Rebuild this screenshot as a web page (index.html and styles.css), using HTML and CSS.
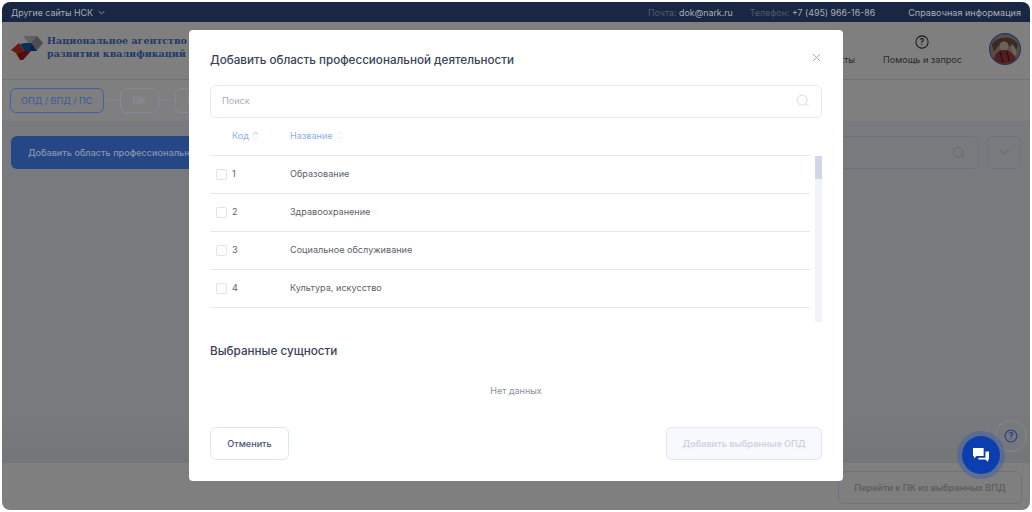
FILE: index.html
```
<!DOCTYPE html>
<html lang="ru">
<head>
<meta charset="utf-8">
<title>НСК</title>
<link rel="stylesheet" href="styles.css">
</head>
<body>
<div class="frame">
  <div class="topbar">
    <div class="sites">Другие сайты НСК <svg class="chev" viewBox="0 0 10 6" width="7" height="5"><path d="M1 1l4 4 4-4" fill="none" stroke="currentColor" stroke-width="1.2"/></svg></div>
    <div class="contacts">
      <span><i>Почта:</i> dok@nark.ru</span>
      <span><i>Телефон:</i> +7 (495) 966-16-86</span>
      <span class="ref">Справочная информация</span>
    </div>
  </div>
  <div class="page">
    <header class="head">
      <svg class="logo" viewBox="0 0 32 25" width="32" height="25">
        <path d="M12 1h14l6 7-6 7-6-7h-3z" fill="#c4c4c4"/><path d="M26 1l6 7-6 7-6-7z" fill="#9a9a9a"/>
        <path d="M9 9l5-1h6l6 8H13z" fill="#0f62b5"/><path d="M20 8l6 8h-7z" fill="#0b4a90"/>
        <path d="M0 15l8-7 5 8-8 2z" fill="#e32a22"/><path d="M5 18l8-2h7l-8 9H9z" fill="#a81818"/>
      </svg>
      <div class="brand">Национальное агентство<br>развития квалификаций</div>
      <div class="spacer"></div>
      <div class="navitem behind"><span>Контакты</span></div>
      <div class="help">
        <svg viewBox="0 0 16 16" width="14" height="14"><circle cx="8" cy="8" r="7" fill="none" stroke="#333" stroke-width="1.2"/><text x="8" y="11.3" class="qmark">?</text></svg>
        <span>Помощь и запрос</span>
      </div>
      <svg class="avatar" viewBox="0 0 32 32" width="32" height="32">
        <circle cx="16" cy="16" r="15.4" fill="#b79a8a" stroke="#3d6bd0" stroke-width="1.2"/>
        <path d="M3 12c3-9 22-11 26 0l-2 6-4-5H9l-4 6z" fill="#6f5648"/>
        <path d="M22 11c4 2 6 6 5 11l-4 1z" fill="#d8c4ad"/>
        <circle cx="15" cy="13" r="4.6" fill="#e0c0ae"/>
        <path d="M5 27c1-8 6-10 10-10s9 2 12 9c-6 6-16 6-22 1z" fill="#a83a44"/>
        <path d="M11 19l3 10M18 18l2 10" stroke="#4b2528" stroke-width="1.4"/>
      </svg>
    </header>
    <nav class="steps">
      <span class="step active">ОПД / ВПД / ПС</span><span class="dots"></span>
      <span class="step">ПК</span><span class="dots"></span>
      <span class="step">С</span>
    </nav>
    <main class="content">
      <div class="addbtn">Добавить область профессиональной деятельности</div>
      <div class="spacer"></div>
      <div class="bgsearch">
        <svg viewBox="0 0 16 16" width="14" height="14"><circle cx="7" cy="7" r="5.5" fill="none" stroke="#c8ccd6" stroke-width="1.1"/><path d="M11 11l3.5 3.5" stroke="#c8ccd6" stroke-width="1.1"/></svg>
      </div>
      <div class="bgchev"><svg viewBox="0 0 12 8" width="11" height="7"><path d="M1 1l5 5 5-5" fill="none" stroke="#c8ccd6" stroke-width="1.1"/></svg></div>
    </main>
    <footer class="foot"><span class="nextbtn">Перейти к ПК из выбранных ВПД</span></footer>
    <div class="overlay"></div>
  </div>

  <section class="modal">
    <div class="m-head">
      <h2>Добавить область профессиональной деятельности</h2>
      <svg class="close" viewBox="0 0 10 10" width="9" height="9"><path d="M1 1l8 8M9 1l-8 8" stroke="#9b9fa8" stroke-width="1"/></svg>
    </div>
    <div class="m-search">
      <span>Поиск</span>
      <svg viewBox="0 0 16 16" width="14" height="14"><circle cx="7" cy="7" r="5.7" fill="none" stroke="#d5d8df" stroke-width="1.1"/><path d="M11 11l3.5 3.5" stroke="#d5d8df" stroke-width="1.1"/></svg>
    </div>
    <div class="tablewrap">
      <div class="table">
        <div class="row th">
          <span class="c-code">Код <svg class="sort" viewBox="0 0 8 10" width="7" height="9"><path d="M1 4l3-3 3 3" fill="none" stroke="#9db8ef" stroke-width="1"/><path d="M1 6.5l3 3 3-3" fill="none" stroke="#e3e7f0" stroke-width="1"/></svg></span>
          <span class="c-name">Название <svg class="sort" viewBox="0 0 8 10" width="7" height="9"><path d="M1 4l3-3 3 3M1 6.5l3 3 3-3" fill="none" stroke="#e3e7f0" stroke-width="1"/></svg></span>
        </div>
        <div class="row"><span class="check"></span><span class="c-num">1</span><span class="c-name">Образование</span></div>
        <div class="row"><span class="check"></span><span class="c-num">2</span><span class="c-name">Здравоохранение</span></div>
        <div class="row"><span class="check"></span><span class="c-num">3</span><span class="c-name">Социальное обслуживание</span></div>
        <div class="row"><span class="check"></span><span class="c-num">4</span><span class="c-name">Культура, искусство</span></div>
      </div>
      <div class="track"><div class="thumb"></div></div>
    </div>
    <h3>Выбранные сущности</h3>
    <div class="empty">Нет данных</div>
    <div class="m-foot">
      <span class="btn">Отменить</span>
      <span class="btn disabled">Добавить выбранные ОПД</span>
    </div>
  </section>

  <div class="fabhelp"><svg viewBox="0 0 16 16" width="14" height="14"><circle cx="8" cy="8" r="6.8" fill="none" stroke="#1f3f8f" stroke-width="1.2"/><text x="8" y="11.2" class="qmark blue">?</text></svg></div>
  <div class="fab"><svg viewBox="0 0 20 18" width="18" height="16"><path d="M1 1h12v9H5l-3 3v-3H1z" fill="#fff"/><path d="M15 5h4v9h-1v3l-3-3H7v-2h8z" fill="#fff"/></svg></div>
</div>
</body>
</html>
```
FILE: styles.css
```
* { box-sizing: border-box; }
html, body { margin: 0; height: 100%; background: #fff; }
body { padding: 2px; font-family: Inter, "Liberation Sans", sans-serif; overflow: hidden; }
.frame { position: relative; width: 1028px; height: 508px; border-radius: 8px; overflow: hidden; display: flex; flex-direction: column; background: #fff; }
.topbar { height: 20px; flex: none; background: #1a2744; color: #a9adb6; font-size: 8.85px; display: flex; align-items: center; justify-content: space-between; padding: 0 9px; }
.sites { display: flex; align-items: center; gap: 4px; }
.chev { margin-left: 1px; }
.contacts { display: flex; gap: 17px; }
.contacts i { font-style: normal; color: #4f5a72; }
.ref { margin-left: 16px; font-size: 9.1px; }
.page { position: relative; flex: 1; display: flex; flex-direction: column; background: #f0f3fa; }
.head { height: 58px; flex: none; background: #fff; display: flex; align-items: center; padding: 0 9px; border-bottom: 1px solid #dde5f7; }
.logo { margin-right: 4px; margin-top: -6px; }
.brand { font-family: "DejaVu Serif", "Liberation Serif", serif; font-weight: 700; font-size: 9.5px; line-height: 12.5px; color: #3f74cc; position: relative; top: -3px; white-space: nowrap; }
.spacer { flex: 1; }
.navitem { font-size: 9.1px; color: #555; margin-right: 28px; margin-top: 17px; }
.help { display: flex; flex-direction: column; align-items: center; gap: 5px; font-size: 9.1px; color: #555; margin-right: 27px; margin-top: -2px; }
.avatar { margin-top: -4px; }
.qmark { font-family: Inter, sans-serif; font-size: 10px; font-weight: 600; text-anchor: middle; fill: #333; }
.qmark.blue { fill: #1f3f8f; }
.steps { height: 41px; flex: none; background: #fff; display: flex; align-items: center; padding: 0 8px; }
.step { position: relative; z-index: 1; height: 25px; border: 1px solid #84889a; border-radius: 6px; display: flex; align-items: center; padding: 0 12px; font-size: 9.1px; font-weight: 500; color: #8a8fa0; }
.step.active { border-color: #3f62a8; color: #3f5f9f; padding: 0 10px; }
.dots { position: relative; z-index: 1; width: 16px; border-top: 1px dotted #84889a; }
.content { flex: 1; display: flex; align-items: flex-start; padding: 15px 9px; gap: 8px; background: linear-gradient(#f2f5fb 85%, #e8ecf4); }
.addbtn { position: relative; z-index: 1; height: 33px; width: 300px; flex: none; background: #264785; color: #8a95b0; border-radius: 6px; display: flex; align-items: center; padding: 0 17px; font-size: 9.1px; font-weight: 500; white-space: nowrap; overflow: hidden; }
.bgsearch { width: 150px; height: 33px; border: 1px solid #dde5f7; border-radius: 6px; display: flex; align-items: center; justify-content: flex-end; padding: 0 12px; }
.bgchev { width: 34px; height: 33px; border: 1px solid #dde5f7; border-radius: 6px; display: flex; align-items: center; justify-content: center; }
.foot { height: 47px; flex: none; background: #fff; display: flex; justify-content: flex-end; padding: 8px 8px 0 0; }
.nextbtn { width: 184px; height: 33px; border: 1px solid #dde5f7; border-radius: 6px; display: flex; align-items: center; justify-content: center; font-size: 9.1px; font-weight: 600; color: #b6bccb; }
.overlay { position: absolute; inset: 0; background: rgba(0, 0, 0, .5); }
.modal { position: absolute; z-index: 2; left: 187px; top: 28px; width: 654px; height: 451px; background: #fff; border-radius: 4px; padding: 0 21px; display: flex; flex-direction: column; }
.m-head { height: 55px; flex: none; display: flex; align-items: center; justify-content: space-between; padding: 4px 1px 0 0; }
.close { margin-top: -4px; }
h2 { margin: 0; font-size: 11.65px; font-weight: 500; color: #3a4256; }
.m-search { height: 33px; flex: none; border: 1px solid #e4eaf7; border-radius: 6px; display: flex; align-items: center; justify-content: space-between; padding: 0 11px 2px; font-size: 9.1px; color: #a9aebb; }
.tablewrap { height: 204px; flex: none; display: flex; justify-content: space-between; overflow: hidden; }
.table { width: 600px; }
.row { height: 38px; display: flex; align-items: center; border-bottom: 1px solid #e4e8f1; font-size: 9.1px; color: #5a5f6e; padding: 0 0 2px 6px; }
.row.th { color: #8eaef0; font-weight: 400; padding-left: 22px; }
.check { width: 11px; height: 11px; border: 1px solid #dfe4ee; border-radius: 2px; margin-right: 5px; margin-top: 2px; }
.c-code { width: 58px; }
.c-num { width: 58px; }
.sort { margin-left: 1px; vertical-align: -1px; }
.track { width: 7px; height: 167px; margin-top: 38px; background: #f0f3fc; }
.thumb { height: 23px; background: #d2d7e5; }
h3 { margin: 21px 0 0; font-size: 11.7px; font-weight: 500; color: #3a4256; line-height: 16px; flex: none; }
.empty { margin-top: 26px; text-align: center; font-size: 9px; color: #8d919c; line-height: 12px; flex: none; }
.m-foot { margin-top: 30px; display: flex; justify-content: space-between; flex: none; }
.btn { height: 33px; width: 79px; border: 1px solid #dfe6f6; border-radius: 6px; display: flex; align-items: center; justify-content: center; font-size: 9.1px; font-weight: 500; color: #4b5470; }
.btn.disabled { width: 156px; background: #f8f9fc; color: #d0d4e0; font-weight: 600; }
.fabhelp { position: absolute; z-index: 3; left: 993px; top: 418px; width: 32px; height: 32px; border: 1px solid #85878c; border-radius: 50%; display: flex; align-items: center; justify-content: center; }
.fab { position: absolute; z-index: 3; left: 960px; top: 434px; width: 38px; height: 38px; border-radius: 50%; background: #0b3fb0; box-shadow: 0 0 0 5px rgba(60, 90, 170, .45); display: flex; align-items: center; justify-content: center; }
```
